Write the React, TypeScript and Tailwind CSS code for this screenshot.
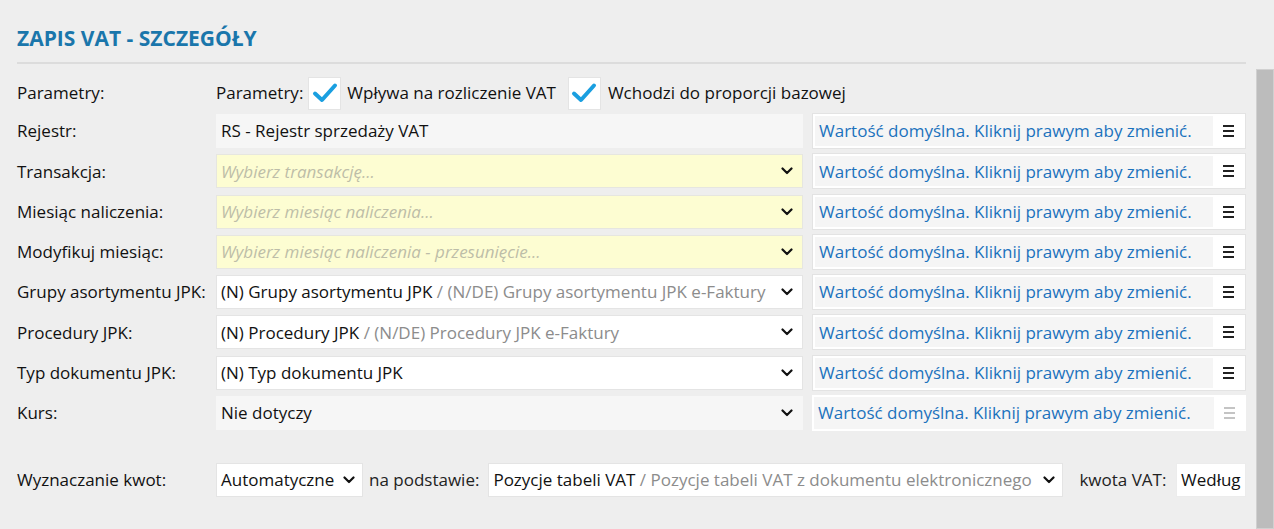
import React from "react";

const FONT = { fontFamily: '"Open Sans", "Noto Sans", sans-serif' };

function Chevron({ className = "" }: { className?: string }) {
  return (
    <svg width="12" height="8" viewBox="0 0 12 8" className={className}>
      <path d="M1.5 1.5 L6 6 L10.5 1.5" fill="none" stroke="#111" strokeWidth="2.2" strokeLinecap="round" strokeLinejoin="round" />
    </svg>
  );
}

function Burger({ light = false }: { light?: boolean }) {
  const c = light ? "bg-[#c4c4c4]" : "bg-[#222]";
  return (
    <div className="flex flex-col gap-[3px] w-[11px]">
      <div className={`h-[2px] ${c}`} />
      <div className={`h-[2px] ${c}`} />
      <div className={`h-[2px] ${c}`} />
    </div>
  );
}

function Check() {
  return (
    <div className="w-[33px] h-[33px] bg-white border border-[#e4e4e4] flex items-center justify-center">
      <svg width="26" height="22" viewBox="0 0 26 22">
        <path d="M3 11.5 L10 18 L23 3.5" fill="none" stroke="#1a9fe0" strokeWidth="4" strokeLinecap="round" strokeLinejoin="round" />
      </svg>
    </div>
  );
}

function DefaultBox({ light = false }: { light?: boolean }) {
  return (
    <div className={`h-[36px] w-[434px] bg-white ${light ? "" : "border border-[#e3e3e3]"} flex items-stretch p-[2px]`}>
      <div className="flex-1 bg-[#f5f5f5] flex items-center pl-[4px] text-[#1b72bd] text-[17px] whitespace-nowrap">
        Wartość domyślna. Kliknij prawym aby zmienić.
      </div>
      <div className="w-[30px] flex items-center justify-center">
        <Burger light={light} />
      </div>
    </div>
  );
}

type FieldKind = "gray" | "yellow" | "white";

function Field({ kind, children, chevron = true }: { kind: FieldKind; children: React.ReactNode; chevron?: boolean }) {
  const bg =
    kind === "gray"
      ? "bg-[#f6f6f6] border-[#f6f6f6]"
      : kind === "yellow"
      ? "bg-[#fdfdd2] border-[#e6e6e0]"
      : "bg-white border-[#e4e4e4]";
  return (
    <div className={`h-[34px] w-[587px] border ${bg} flex items-center pl-[4px] pr-[9px]`}>
      <div className="flex-1 text-[17px] whitespace-nowrap overflow-hidden">{children}</div>
      {chevron && <Chevron />}
    </div>
  );
}

function Row({ label, field, light }: { label: string; field: React.ReactNode; light?: boolean }) {
  return (
    <div className="h-[36px] flex items-center">
      <div className="w-[199px] text-[17px] text-[#111] whitespace-nowrap">{label}</div>
      {field}
      <div className="w-[9px]" />
      <DefaultBox light={light} />
    </div>
  );
}

export default function App() {
  return (
    <div className="w-[1274px] h-[529px] bg-[#eeeeee] flex overflow-hidden text-[#111]" style={FONT}>
      <div className="flex-1 pl-[17px] pr-[10px] flex flex-col">
        <div className="pt-[25px] h-[62px]">
          <div className="text-[21px] leading-[26px] font-bold text-[#1a76ab]">ZAPIS VAT - SZCZEGÓŁY</div>
        </div>
        <div className="h-[2px] bg-[#dcdcdc]" />
        <div className="h-[11px]" />
        <div className="h-[36px] flex items-center text-[17px]">
          <div className="w-[199px]">Parametry:</div>
          <div>Parametry:</div>
          <div className="w-[5px]" />
          <Check />
          <div className="w-[6px]" />
          <div>Wpływa na rozliczenie VAT</div>
          <div className="w-[12px]" />
          <Check />
          <div className="w-[7px]" />
          <div>Wchodzi do proporcji bazowej</div>
        </div>
        <div className="h-[2px]" />
        <div className="flex flex-col gap-[4.3px]">
          <Row label="Rejestr:" field={<Field kind="gray" chevron={false}>RS - Rejestr sprzedaży VAT</Field>} />
          <Row
            label="Transakcja:"
            field={<Field kind="yellow"><span className="italic text-[#bdbda8]">Wybierz transakcję...</span></Field>}
          />
          <Row
            label="Miesiąc naliczenia:"
            field={<Field kind="yellow"><span className="italic text-[#bdbda8]">Wybierz miesiąc naliczenia...</span></Field>}
          />
          <Row
            label="Modyfikuj miesiąc:"
            field={<Field kind="yellow"><span className="italic text-[#bdbda8]">Wybierz miesiąc naliczenia - przesunięcie...</span></Field>}
          />
          <Row
            label="Grupy asortymentu JPK:"
            field={
              <Field kind="white">
                (N) Grupy asortymentu JPK <span className="text-[#8c8c8c]">/ (N/DE) Grupy asortymentu JPK e-Faktury</span>
              </Field>
            }
          />
          <Row
            label="Procedury JPK:"
            field={
              <Field kind="white">
                (N) Procedury JPK <span className="text-[#8c8c8c]">/ (N/DE) Procedury JPK e-Faktury</span>
              </Field>
            }
          />
          <Row label="Typ dokumentu JPK:" field={<Field kind="white">(N) Typ dokumentu JPK</Field>} />
          <Row label="Kurs:" light field={<Field kind="gray">Nie dotyczy</Field>} />
        </div>
        <div className="h-[31px]" />
        <div className="h-[36px] flex items-center text-[17px]">
          <div className="w-[199px]">Wyznaczanie kwot:</div>
          <div className="h-[34px] w-[147px] bg-white border border-[#e4e4e4] flex items-center pl-[4px] pr-[7px]">
            <span className="flex-1">Automatyczne</span>
            <Chevron />
          </div>
          <div className="w-[6px]" />
          <span className="text-[#222]">na podstawie:</span>
          <div className="w-[9px]" />
          <div className="h-[34px] w-[575px] bg-white border border-[#e4e4e4] flex items-center pl-[4px] pr-[7px]">
            <span className="flex-1 whitespace-nowrap overflow-hidden">
              Pozycje tabeli VAT <span className="text-[#8c8c8c]">/ Pozycje tabeli VAT z dokumentu elektronicznego</span>
            </span>
            <Chevron />
          </div>
          <div className="w-[16px]" />
          <span className="text-[#222]">kwota VAT:</span>
          <div className="flex-1" />
          <div className="h-[34px] w-[70px] bg-white border border-[#ececec] flex items-center pl-[4px] overflow-hidden whitespace-nowrap">
            Według
          </div>
        </div>
      </div>
      <div className="w-[18px] pt-[69px] flex flex-col">
        <div className="flex-1 bg-[#bcbcbc] border border-[#d0d0d0]" />
      </div>
    </div>
  );
}
